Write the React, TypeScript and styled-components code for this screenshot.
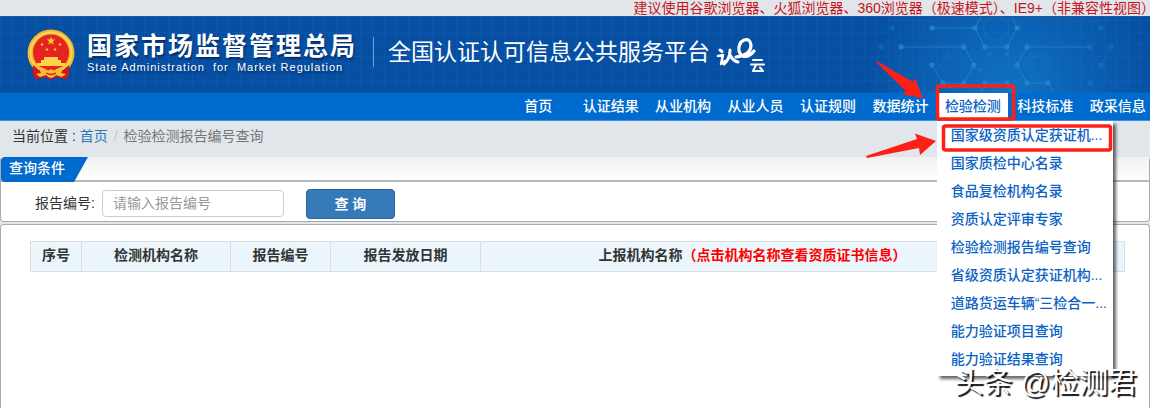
import React from "react";
import styled, { createGlobalStyle } from "styled-components";

const GlobalStyle = createGlobalStyle`
  * { box-sizing: border-box; }
  body {
    margin: 0;
    overflow-x: hidden;
    background: #fff;
    color: #333;
    font: 14px/20px "Liberation Sans", "Noto Sans CJK SC", sans-serif;
  }
  a { color: inherit; text-decoration: none; }
  ul, ol { list-style: none; margin: 0; padding: 0; }
`;

const Page = styled.div`
  position: relative;
  min-height: 100vh;
  display: flex;
  flex-direction: column;
`;

const Notice = styled.p`
  margin: 0;
  padding-right: 2px;
  height: 16px;
  line-height: 16px;
  text-align: right;
  white-space: nowrap;
  color: #c9141c;
  background: #e1e6eb;
`;

const HalfWidthMark = styled.span`
  font-feature-settings: "halt";
`;

const Banner = styled.header`
  position: relative;
  display: flex;
  align-items: center;
  height: 77px;
  padding-left: 27px;
  color: #fff;
  border-top: 1px solid #1c5a9c;
  background:
    radial-gradient(circle 150px at calc(100% - 140px) 100%, rgba(20, 125, 205, 0.75), transparent),
    repeating-linear-gradient(90deg, rgba(60, 140, 220, 0.1) 0 1px, transparent 1px 12px),
    repeating-linear-gradient(0deg, rgba(60, 140, 220, 0.1) 0 1px, transparent 1px 12px),
    #064fa3;
`;

const Molecules = styled.svg`
  position: absolute;
  right: 0;
  top: 0;
`;

const Agency = styled.div`
  margin-left: 12px;
  padding: 0 16px 4px 0;
  white-space: nowrap;
  text-shadow: 1px 2px 2px rgba(0, 20, 60, 0.6);
`;

const AgencyName = styled.h1`
  margin: 0;
  font-size: 25px;
  line-height: 28px;
  letter-spacing: 2px;
  font-weight: 700;
`;

const AgencyEnglish = styled.p`
  margin: 0;
  font-size: 11px;
  line-height: 14px;
  letter-spacing: 1px;
  white-space: pre;
`;

const Platform = styled.h2`
  margin: 0 0 6px;
  padding: 0 6px 0 14px;
  border-left: 1px solid #6f9fd2;
  font-size: 23px;
  line-height: 30px;
  font-weight: 400;
  white-space: nowrap;
`;

const NavBar = styled.nav`
  display: flex;
  justify-content: flex-end;
  height: 28px;
  background: #006bce;
  border-bottom: 1px solid #3f8fdc;
`;

const NavList = styled.ul`
  display: grid;
  grid-template-columns: repeat(9, 1fr);
  width: 652px;
  margin-right: -4px;
`;

const NavItem = styled.li`
  position: relative;
  text-align: center;
`;

const NavLink = styled.a<{ $active?: boolean }>`
  display: block;
  margin: 0 1px;
  line-height: 26px;
  white-space: nowrap;
  font-weight: 500;
  color: ${(p) => (p.$active ? "#0a63c4" : "#fff")};
  background: ${(p) => (p.$active ? "#fff" : "transparent")};
`;

const Menu = styled.ul`
  position: absolute;
  z-index: 2;
  top: 28px;
  left: 0;
  width: 176px;
  padding: 0 0 3px 14px;
  background: #fff;
  box-shadow: 3px 3px 3px rgba(0, 0, 0, 0.6);
  text-align: left;
  line-height: 28px;
  font-weight: 500;
  color: #0a63c4;
  white-space: nowrap;
`;

const Marks = styled.svg`
  position: absolute;
  z-index: 3;
  top: -43px;
  left: -77px;
  pointer-events: none;
`;

const Crumbs = styled.ol`
  display: flex;
  height: 36px;
  padding: 0 12px;
  line-height: 31px;
  background: #e1e6eb;
`;

const Crumb = styled.li`
  color: #777;
  a { color: #2f77ba; }
  & + &::before { content: "/"; padding: 0 6px; color: #c4c8cc; }
`;

const CrumbLabel = styled.li`
  white-space: pre;
  color: #333;
`;

const Panel = styled.section`
  border: 1px solid #aaa;
  border-radius: 4px;
  background: #fff;
`;

const SearchPanel = styled(Panel)`
  border-top: 0;
`;

const ResultPanel = styled(Panel)`
  flex: 1;
  padding: 16px 24px 0 29px;
  border-bottom: 0;
  border-radius: 4px 4px 0 0;
`;

const Frame = styled.main`
  flex: 1;
  display: flex;
  flex-direction: column;
  gap: 2px;
  background: #e1e6eb;
`;

const PanelHead = styled.div`
  height: 25px;
  border-bottom: 2px solid #b8b8b8;
  background: linear-gradient(#f1f1f1, #fff);
`;

const PanelTitle = styled.h3`
  margin: 0;
  width: 87px;
  height: 25px;
  padding-left: 8px;
  font-size: 14px;
  line-height: 23px;
  font-weight: 500;
  color: #fff;
  background: #006bce;
  border-radius: 4px 0 0 4px;
  clip-path: polygon(0 0, 100% 0, 73px 100%, 0 100%);
`;

const SearchForm = styled.form`
  display: flex;
  align-items: center;
  height: 39px;
  padding: 3px 0 0 34px;
`;

const Input = styled.input`
  width: 182px;
  height: 27px;
  margin: 0 22px 0 7px;
  padding: 0 10px;
  border: 1px solid #ccc;
  border-radius: 4px;
  font: inherit;
  color: #555;
  &::placeholder { color: #999; opacity: 1; }
`;

const Submit = styled.button`
  width: 89px;
  height: 30px;
  margin-top: 2px;
  padding: 0;
  border: 1px solid #2663a0;
  border-radius: 4px;
  background: #337ab7;
  color: #fff;
  font: inherit;
  font-weight: 700;
`;

const Table = styled.table`
  width: 100%;
  table-layout: fixed;
  border-collapse: collapse;
`;

const Th = styled.th<{ $width?: number }>`
  width: ${(p) => (p.$width ? `${p.$width}px` : "auto")};
  height: 30px;
  padding: 0 0 4px;
  border: 1px solid #ddd;
  background: #eaf6fb;
  font-weight: 700;
  white-space: nowrap;
`;

const Hint = styled.span`
  color: #f00;
`;

const Watermark = styled.div`
  position: absolute;
  z-index: 4;
  right: 13px;
  top: 365px;
  font-size: 29px;
  line-height: 36px;
  color: #fff;
  text-shadow: 2px 2px 1px #111;
  white-space: nowrap;
`;

const navItems = ["首页", "认证结果", "从业机构", "从业人员", "认证规则", "数据统计", "检验检测", "科技标准", "政采信息"];

const menuItems = [
  "国家级资质认定获证机...",
  "国家质检中心名录",
  "食品复检机构名录",
  "资质认定评审专家",
  "检验检测报告编号查询",
  "省级资质认定获证机构...",
  "道路货运车辆“三检合一...",
  "能力验证项目查询",
  "能力验证结果查询",
];

const starPoints = (cx: number, cy: number, r: number) =>
  Array.from({ length: 10 }, (_, i) => {
    const a = (Math.PI / 5) * i - Math.PI / 2;
    const d = i % 2 ? r * 0.4 : r;
    return `${cx + d * Math.cos(a)},${cy + d * Math.sin(a)}`;
  }).join(" ");

const Emblem = () => (
  <svg width="48" height="52" viewBox="0 0 48 52" role="img" aria-label="国徽">
    <path d="M7 37 L41 37 L42 44 L39 50 L29 48 L24 46 L19 48 L9 50 L6 44 Z" fill="#d3161c" />
    <circle cx="24" cy="24" r="23.5" fill="#f3b52c" />
    <circle cx="24" cy="24" r="20.5" fill="none" stroke="#ffd65a" strokeWidth="2" />
    <circle cx="24" cy="23.5" r="18" fill="#e5231f" />
    <polygon points={starPoints(24, 12, 4.6)} fill="#ffc83a" />
    <polygon points={starPoints(15, 15.5, 2)} fill="#ffc83a" />
    <polygon points={starPoints(33, 15.5, 2)} fill="#ffc83a" />
    <polygon points={starPoints(20, 20.5, 2)} fill="#ffc83a" />
    <polygon points={starPoints(28, 20.5, 2)} fill="#ffc83a" />
    <path d="M17 28 H31 V31 H34 V34 H38 V37 H10 V34 H14 V31 H17 Z" fill="#ffd24a" />
    <path d="M6 36 L12 41 L19 41 L24 45 L29 41 L36 41 L42 36 L42 46 L39 50 L29 48 L24 51 L19 48 L9 50 L6 46 Z" fill="#d3161c" />
    <path d="M11 38 Q17 38 21 42 L24 40 L27 42 Q31 38 37 38 L34 44 L39 45 L35 48 L29 46 Q24 52 19 46 L13 48 L9 45 L14 44 Z" fill="#f6bd35" />
    <path d="M19 44 Q24 47 29 44" fill="none" stroke="#d3161c" strokeWidth="1.3" />
  </svg>
);

const CloudLogo = () => (
  <svg width="50" height="36" viewBox="0 0 50 36" fill="none" stroke="#fff" strokeLinecap="round" strokeLinejoin="round" role="img" aria-label="认e云">
    <path d="M4 13 L6 14.500" strokeWidth="3" />
    <path d="M2 19 L7 18 L5 27 L9 24" strokeWidth="2.5" />
    <path d="M14 13 Q14 22 8 27 M14 18 Q17 24 22 25" strokeWidth="3" />
    <path d="M20 20 Q35 18 35 8 Q34 1 28 3 Q22 6 23 14 Q25 21 32 19 Q36 17 38 14" strokeWidth="3.2" />
    <path d="M37 23 H46 M35 27.500 H48 M40 28 L37 34 H46 M44 30.500 L47 34" strokeWidth="2" />
  </svg>
);

const nodes = [
  [182, 83], [225, 83], [235, 102], [257, 102], [267, 83], [151, 102], [214, 102], [224, 120],
  [214, 138], [193, 138], [182, 120], [267, 120], [277, 102], [277, 138], [298, 138], [235, 138], [257, 138],
];
const dimNodes = [[142, 83], [131, 102], [340, 102], [351, 83], [361, 102], [351, 120], [340, 138], [239, 109], [257, 109], [230, 125]];

const HexPattern = () => (
  <Molecules width="400" height="76" viewBox="0 72 400 76" aria-hidden="true">
    <g fill="none" stroke="#2f8fd0" strokeOpacity="0.6">
      <path d="M182 83 H225 L235 102 H257 L267 83 L262 72 M225 83 L231 72" />
      <path d="M151 102 H214 L224 120 L214 138 H193 L182 120" />
      <path d="M340 102 H277 L267 120 L277 138 H298 L305 149" />
      <path d="M230 149 L235 138 H257 L262 149" />
    </g>
    <g fill="none" stroke="#2f8fd0" strokeOpacity="0.22">
      <path d="M232 83 L239 73 H253 L260 83 L253 95 H239 Z" />
      <path d="M190 120 L197 108 H210 L218 120 L210 132 H197 Z" />
      <path d="M273 120 L281 108 H295 L302 120 L295 132 H281 Z M277 120 L283 111 H293 L298 120 L293 129 H283 Z" />
      <path d="M142 83 L148 72 M351 83 L345 72 M361 102 L351 120 L361 138" />
    </g>
    {nodes.map(([x, y]) => <circle key={`${x}-${y}`} cx={x} cy={y} r="2.600" fill="#268acb" fillOpacity="0.8" />)}
    {dimNodes.map(([x, y]) => <circle key={`${x}-${y}`} cx={x} cy={y} r="2.600" fill="#268acb" fillOpacity="0.3" />)}
  </Molecules>
);

export default function App() {
  return (
    <Page>
      <GlobalStyle />
      <Notice>
        建议使用谷歌浏览器、火狐浏览器、360浏览器（极速模式）、IE9+（非兼容性视图<HalfWidthMark>）</HalfWidthMark>
      </Notice>
      <Banner>
        <HexPattern />
        <Emblem />
        <Agency>
          <AgencyName>国家市场监督管理总局</AgencyName>
          <AgencyEnglish>{"State Administration  for  Market Regulation"}</AgencyEnglish>
        </Agency>
        <Platform>全国认证认可信息公共服务平台</Platform>
        <CloudLogo />
      </Banner>
      <NavBar>
        <NavList>
          {navItems.map((label) => {
            const active = label === "检验检测";
            return (
              <NavItem key={label}>
                <NavLink href="#" $active={active}>{label}</NavLink>
                {active && (
                  <>
                    <Menu>
                      {menuItems.map((item) => <li key={item}><a href="#">{item}</a></li>)}
                    </Menu>
                    <Marks width="260" height="110" viewBox="860 50 260 110" aria-hidden="true">
                      <g fill="none" stroke="#fe2016" strokeWidth="3.500">
                        <rect x="937.500" y="86" width="76" height="33" rx="1.500" />
                        <rect x="943.500" y="126" width="167" height="24" rx="2" />
                      </g>
                      <path fill="#fe2016" d="M876 60.500 L913 82 L915 78 L923 98.500 L902 94 L906 91 L877 63 Z" />
                      <path fill="#fe2016" d="M866 156 L917 139 L915 133.500 L936 141 L920 155 L919 148 L867 158 Z" />
                    </Marks>
                  </>
                )}
              </NavItem>
            );
          })}
        </NavList>
      </NavBar>
      <Crumbs>
        <CrumbLabel>当前位置 : </CrumbLabel>
        <Crumb><a href="#">首页</a></Crumb>
        <Crumb>检验检测报告编号查询</Crumb>
      </Crumbs>
      <Frame>
        <SearchPanel>
          <PanelHead><PanelTitle>查询条件</PanelTitle></PanelHead>
          <SearchForm onSubmit={(e) => e.preventDefault()}>
            <label htmlFor="report-no">报告编号:</label>
            <Input id="report-no" placeholder="请输入报告编号" />
            <Submit type="submit">查 询</Submit>
          </SearchForm>
        </SearchPanel>
        <ResultPanel>
          <Table>
            <thead>
              <tr>
                <Th $width={51}>序号</Th>
                <Th $width={149}>检测机构名称</Th>
                <Th $width={100}>报告编号</Th>
                <Th $width={150}>报告发放日期</Th>
                <Th>上报机构名称<Hint>（点击机构名称查看资质证书信息）</Hint></Th>
                <Th $width={100} />
              </tr>
            </thead>
          </Table>
        </ResultPanel>
      </Frame>
      <Watermark>头条 @检测君</Watermark>
    </Page>
  );
}
